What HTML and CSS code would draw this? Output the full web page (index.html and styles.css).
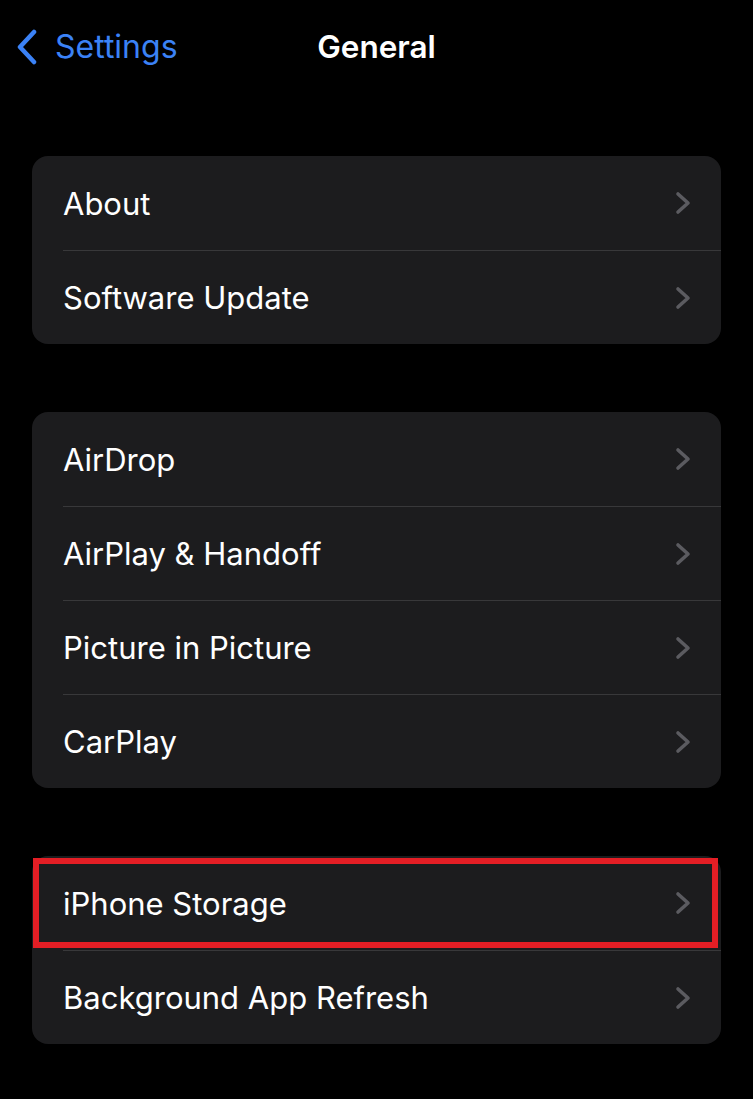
FILE: index.html
```html
<!DOCTYPE html>
<html lang="en">
<head>
  <meta charset="UTF-8" />
  <meta name="viewport" content="width=device-width, initial-scale=1.0"/>
  <title>General</title>
  <link rel="stylesheet" href="styles.css">
</head>
<body>
  <div class="nav">
    <a class="back" href="#">
      <svg class="back-icon" width="22" height="36" viewBox="0 0 22 36">
        <path d="M18 3 L4 18 L18 33" fill="none" stroke="#3b82f6" stroke-width="4.5" stroke-linecap="round" stroke-linejoin="round"/>
      </svg>
      <span>Settings</span>
    </a>
    <div class="title">General</div>
  </div>

  <div class="group">
    <div class="row"><span>About</span><svg class="chev" width="16" height="24" viewBox="0 0 16 24"><path d="M3 3 L13 12 L3 21"/></svg></div>
    <div class="row"><span>Software Update</span><svg class="chev" width="16" height="24" viewBox="0 0 16 24"><path d="M3 3 L13 12 L3 21"/></svg></div>
  </div>

  <div class="group">
    <div class="row"><span>AirDrop</span><svg class="chev" width="16" height="24" viewBox="0 0 16 24"><path d="M3 3 L13 12 L3 21"/></svg></div>
    <div class="row"><span>AirPlay &amp; Handoff</span><svg class="chev" width="16" height="24" viewBox="0 0 16 24"><path d="M3 3 L13 12 L3 21"/></svg></div>
    <div class="row"><span>Picture in Picture</span><svg class="chev" width="16" height="24" viewBox="0 0 16 24"><path d="M3 3 L13 12 L3 21"/></svg></div>
    <div class="row"><span>CarPlay</span><svg class="chev" width="16" height="24" viewBox="0 0 16 24"><path d="M3 3 L13 12 L3 21"/></svg></div>
  </div>

  <div class="group">
    <div class="row marked"><span>iPhone Storage</span><svg class="chev" width="16" height="24" viewBox="0 0 16 24"><path d="M3 3 L13 12 L3 21"/></svg></div>
    <div class="row"><span>Background App Refresh</span><svg class="chev" width="16" height="24" viewBox="0 0 16 24"><path d="M3 3 L13 12 L3 21"/></svg></div>
  </div>
</body>
</html>
```

FILE: styles.css
```css
body {
  margin: 0;
  background: #000;
  color: #fff;
  font-family: Inter, "Noto Sans", sans-serif;
}
.nav {
  position: relative;
  height: 93px;
  display: flex;
  align-items: center;
  justify-content: center;
  margin-bottom: 63px;
}
.back {
  position: absolute;
  left: 16px;
  top: 0;
  height: 93px;
  display: flex;
  align-items: center;
  gap: 17px;
  color: #3b82f6;
  text-decoration: none;
  font-size: 32px;
}
.title {
  font-size: 31.5px;
  font-weight: 600;
}
.group {
  margin: 0 32px 68px 32px;
  background: #1c1c1e;
  border-radius: 16px;
}
.row {
  position: relative;
  height: 94px;
  margin-left: 31px;
  padding-right: 30px;
  display: flex;
  align-items: center;
  justify-content: space-between;
  font-size: 31px;
}
.row + .row {
  border-top: 1px solid #38383a;
  height: 93px;
}
.chev path {
  fill: none;
  stroke: #5b5b60;
  stroke-width: 3.6;
  stroke-linecap: round;
  stroke-linejoin: round;
}
.marked::after {
  content: "";
  position: absolute;
  left: -30px;
  right: 3px;
  top: 2px;
  bottom: 2px;
  border: 6px solid #e31e25;
  pointer-events: none;
}
```
